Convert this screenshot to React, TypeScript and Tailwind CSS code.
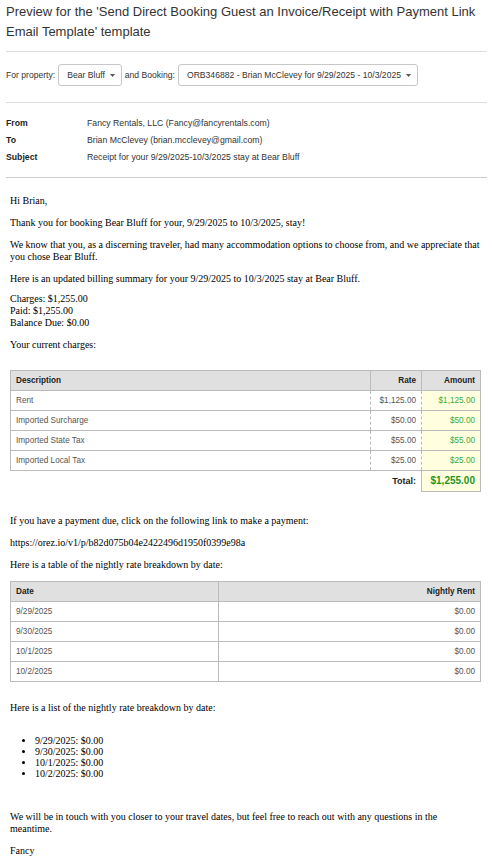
const charges = [
  { desc: "Rent", rate: "$1,125.00", amount: "$1,125.00" },
  { desc: "Imported Surcharge", rate: "$50.00", amount: "$50.00" },
  { desc: "Imported State Tax", rate: "$55.00", amount: "$55.00" },
  { desc: "Imported Local Tax", rate: "$25.00", amount: "$25.00" },
]

const nights = [
  { date: "9/29/2025", rent: "$0.00" },
  { date: "9/30/2025", rent: "$0.00" },
  { date: "10/1/2025", rent: "$0.00" },
  { date: "10/2/2025", rent: "$0.00" },
]

function Select({ label }: { label: string }) {
  return (
    <button className="flex items-center gap-[5px] h-[22px] pl-[8px] pr-[6px] border border-[#c8c8c8] rounded-[3px] bg-white text-[#333]">
      {label}
      <svg width="5" height="3" viewBox="0 0 5 3" className="text-[#555]">
        <path d="M0 0h5L2.5 3z" fill="currentColor" />
      </svg>
    </button>
  )
}

export default function App() {
  return (
    <div className="bg-white min-h-[862px] px-[6px] font-['Liberation_Sans',Arial,sans-serif] text-[#333]">
      {/* Title */}
      <h1 className="pt-[2px] pb-[9px] text-[13px] leading-[20px] text-[#333]">
        Preview for the 'Send Direct Booking Guest an Invoice/Receipt with Payment Link Email Template' template
      </h1>
      <hr className="border-[#ddd]" />

      {/* Pickers */}
      <div className="flex items-center gap-[3px] pt-[12px] pb-[16px] text-[8.6px]">
        <span>For property:</span>
        <Select label="Bear Bluff" />
        <span>and Booking:</span>
        <Select label="ORB346882 - Brian McClevey for 9/29/2025 - 10/3/2025" />
      </div>
      <hr className="border-[#ddd]" />

      {/* Envelope */}
      <div className="pt-[14px] pb-[14px] text-[8.7px] grid grid-cols-[81px_1fr] gap-y-[5px] leading-[12px]">
        <span className="font-semibold text-[#222]">From</span>
        <span>Fancy Rentals, LLC (Fancy@fancyrentals.com)</span>
        <span className="font-semibold text-[#222]">To</span>
        <span>Brian McClevey (brian.mcclevey@gmail.com)</span>
        <span className="font-semibold text-[#222]">Subject</span>
        <span>Receipt for your 9/29/2025-10/3/2025 stay at Bear Bluff</span>
      </div>
      <hr className="border-[#ccc]" />

      {/* Email body */}
      <div className="pl-[4px] pr-[6px] pt-[17px] font-['Liberation_Serif','Times_New_Roman',serif] text-[10px] leading-[12px] text-black">
        <p>Hi Brian,</p>
        <p className="mt-[10px]">Thank you for booking Bear Bluff for your, 9/29/2025 to 10/3/2025, stay!</p>
        <p className="mt-[10px]">
          We know that you, as a discerning traveler, had many accommodation options to choose from, and we appreciate that you chose Bear Bluff.
        </p>
        <p className="mt-[10px]">Here is an updated billing summary for your 9/29/2025 to 10/3/2025 stay at Bear Bluff.</p>
        <p className="mt-[8px]">
          Charges: $1,255.00
          <br />
          Paid: $1,255.00
          <br />
          Balance Due: $0.00
        </p>
        <p className="mt-[10px]">Your current charges:</p>

        <table className="mt-[19px] w-full border-collapse font-['Liberation_Sans',Arial,sans-serif] text-[8.2px] text-[#555]">
          <thead>
            <tr className="h-[20px] bg-[#e0e0e0] text-[#222]">
              <th className="border border-[#bbb] px-[5px] text-left font-bold">Description</th>
              <th className="w-[51px] border border-[#bbb] px-[5px] text-right font-bold">Rate</th>
              <th className="w-[59px] border border-[#bbb] px-[5px] text-right font-bold">Amount</th>
            </tr>
          </thead>
          <tbody>
            {charges.map((c) => (
              <tr key={c.desc} className="h-[20px]">
                <td className="border border-[#bbb] [border-right-style:dashed] px-[5px]">{c.desc}</td>
                <td className="border border-[#bbb] [border-right-style:dashed] [border-left-style:dashed] px-[5px] text-right">{c.rate}</td>
                <td className="border border-[#bbb] [border-left-style:dashed] bg-[#ffffe0] px-[5px] text-right text-[#3aaa3a]">{c.amount}</td>
              </tr>
            ))}
            <tr className="h-[21px]">
              <td />
              <td className="px-[5px] text-right text-[9px] font-bold text-[#222]">Total:</td>
              <td className="border border-[#bbb] bg-[#ffffe0] px-[5px] text-right text-[10px] font-bold text-[#1e951e]">$1,255.00</td>
            </tr>
          </tbody>
        </table>

        <p className="mt-[23px]">If you have a payment due, click on the following link to make a payment:</p>
        <p className="mt-[10px]">https://orez.io/v1/p/b82d075b04e2422496d1950f0399e98a</p>
        <p className="mt-[10px]">Here is a table of the nightly rate breakdown by date:</p>

        <table className="mt-[10px] w-full border-collapse font-['Liberation_Sans',Arial,sans-serif] text-[8.2px] text-[#555]">
          <thead>
            <tr className="h-[20px] bg-[#e0e0e0] text-[#222]">
              <th className="w-[208px] border border-[#bbb] px-[5px] text-left font-bold">Date</th>
              <th className="border border-[#bbb] px-[5px] text-right font-bold">Nightly Rent</th>
            </tr>
          </thead>
          <tbody>
            {nights.map((n) => (
              <tr key={n.date} className="h-[20px]">
                <td className="border border-[#bbb] px-[5px]">{n.date}</td>
                <td className="border border-[#bbb] px-[5px] text-right">{n.rent}</td>
              </tr>
            ))}
          </tbody>
        </table>

        <p className="mt-[20px]">Here is a list of the nightly rate breakdown by date:</p>
        <ul className="mt-[21px] list-disc pl-[25px] leading-[11px] text-[10px]">
          {nights.map((n) => (
            <li key={n.date}>
              {n.date}: {n.rent}
            </li>
          ))}
        </ul>

        <p className="mt-[32px]">
          We will be in touch with you closer to your travel dates, but feel free to reach out with any questions in the meantime.
        </p>
        <p className="mt-[10px]">Fancy</p>
      </div>
    </div>
  )
}
